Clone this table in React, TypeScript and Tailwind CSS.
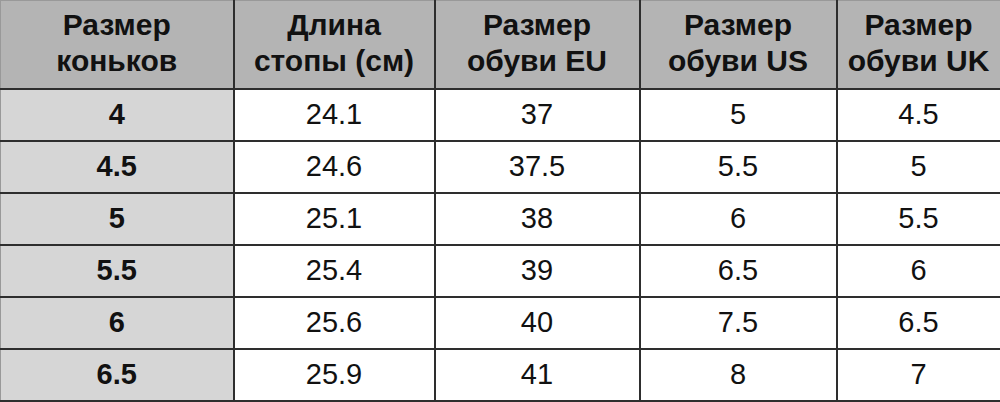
const HEAD = [
  ["Размер", "коньков"],
  ["Длина", "стопы (см)"],
  ["Размер", "обуви EU"],
  ["Размер", "обуви US"],
  ["Размер", "обуви UK"],
]

const ROWS = [
  ["4", "24.1", "37", "5", "4.5"],
  ["4.5", "24.6", "37.5", "5.5", "5"],
  ["5", "25.1", "38", "6", "5.5"],
  ["5.5", "25.4", "39", "6.5", "6"],
  ["6", "25.6", "40", "7.5", "6.5"],
  ["6.5", "25.9", "41", "8", "7"],
]

const WIDTHS = ["w-[233px]", "w-[201px]", "w-[205px]", "w-[197px]", "w-[164px]"]

export default function App() {
  return (
    <div className="w-[1000px] h-[402px] bg-white overflow-hidden font-['Liberation_Sans',Arial,sans-serif] text-[#111]">
      <table className="w-[999px] table-fixed border-collapse border-l border-t border-r-2 border-[#999]">
        <colgroup>
          {WIDTHS.map((w, i) => (
            <col key={i} className={w} />
          ))}
        </colgroup>
        <thead>
          <tr className="h-[88px] bg-[#b4b4b4]">
            {HEAD.map((h, i) => (
              <th
                key={i}
                className="border-2 border-[#2e2e2e] border-t-0 first:border-l-0 last:border-r-[#999] text-[30px] leading-[36px] font-bold text-center align-middle pb-[2px]"
              >
                {h[0]}
                <br />
                {h[1]}
              </th>
            ))}
          </tr>
        </thead>
        <tbody>
          {ROWS.map((r, ri) => (
            <tr key={ri} className="h-[52px]">
              {r.map((c, ci) => (
                <td
                  key={ci}
                  className={
                    "border-2 border-[#2e2e2e] first:border-l-0 last:border-r-[#999] text-center align-middle text-[29px] " +
                    (ci === 0 ? "bg-[#d6d6d6] font-bold" : "bg-white")
                  }
                >
                  {c}
                </td>
              ))}
            </tr>
          ))}
        </tbody>
      </table>
    </div>
  )
}
